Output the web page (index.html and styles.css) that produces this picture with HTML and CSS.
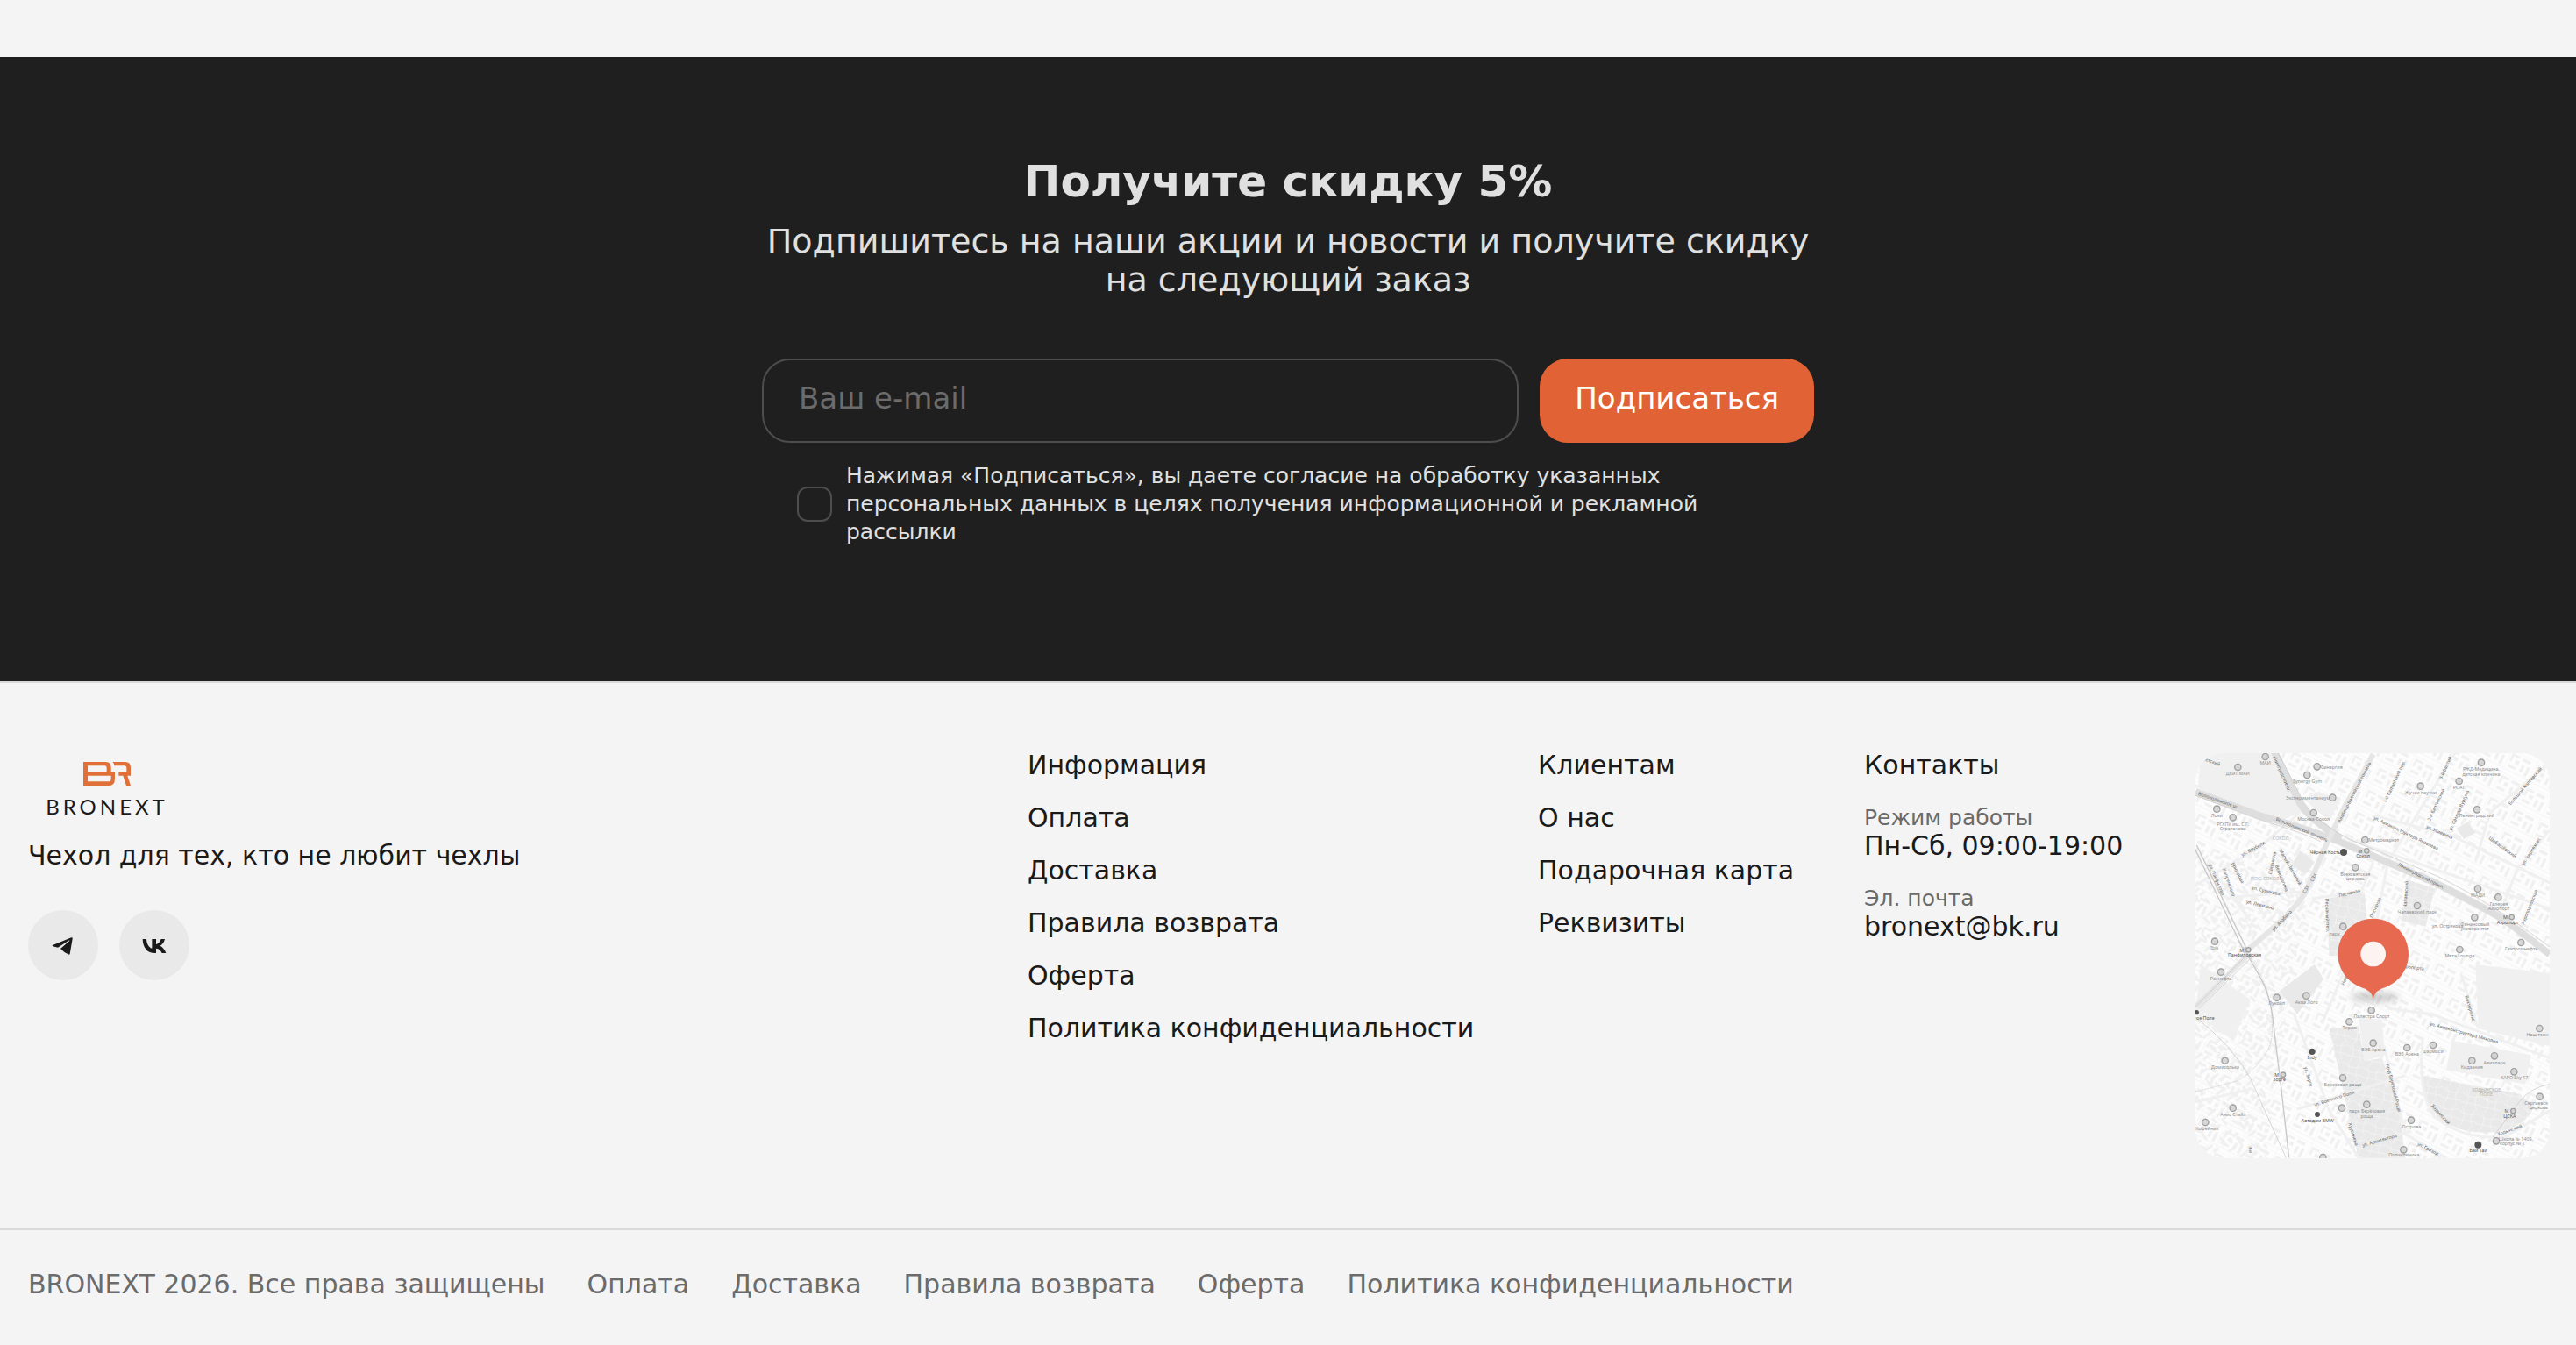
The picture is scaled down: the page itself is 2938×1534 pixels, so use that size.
FILE: index.html
```html
<!DOCTYPE html>
<html lang="ru">

<head>
    <meta charset="UTF-8">
    <meta name="viewport" content="width=device-width, initial-scale=1.0">
    <title>BRONEXT</title>
    <link rel="stylesheet" href="styles.css">
</head>

<body>
    <section class="subscribe">
        <h2 class="subscribe__title">Получите скидку 5%</h2>
        <p class="subscribe__text">Подпишитесь на наши акции и новости и получите скидку на следующий заказ</p>
        <form class="subscribe__form">
            <div class="subscribe__row">
                <input class="subscribe__input" type="email" aria-label="Ваш e-mail" placeholder="Ваш e-mail">
                <button class="subscribe__button" type="submit">Подписаться</button>
            </div>
            <div class="consent">
                <input class="consent__box" type="checkbox" id="consent">
                <label class="consent__label" for="consent">Нажимая «Подписаться», вы даете согласие на обработку указанных персональных данных в целях получения информационной и рекламной рассылки</label>
            </div>
        </form>
    </section>

    <footer class="footer">
        <div class="footer__top">
            <div class="brand">
                <a class="brand__logo" href="#">
                    <svg class="brand__mark" viewBox="195 57 162 81" aria-hidden="true">
                        <path fill-rule="evenodd" d="M195 57H272Q290 57 290 75V90H303V115Q303 138 283 138H195ZM210 70V90H275V77Q275 70 268 70ZM210 104V124H282Q290 124 290 113V104Z" />
                        <path d="M295 57H338Q357 57 357 76V104H346L357 138H342L331 104H316V90H343V78Q343 70 335 70H301Q301 61 295 57Z" />
                    </svg>
                    <span class="brand__name">BRONEXT</span>
                </a>
                <p class="brand__slogan">Чехол для тех, кто не любит чехлы</p>
                <div class="socials">
                    <a class="socials__link" href="#" aria-label="Telegram">
                        <svg viewBox="36 27 240 240" aria-hidden="true">
                            <path d="M120 147L184 121Q189 119 188 125L179 177Q178 181 173 178Q158 171 147 159L178 132Q179 129 175 131L138 155L121 151Q117 149 120 147Z" />
                        </svg>
                    </a>
                    <a class="socials__link" href="#" aria-label="VK">
                        <svg viewBox="348 27 240 240" aria-hidden="true">
                            <path d="M428 126H441C442 143 449 155 460 158V126H474V144C482 143 488 135 491 126H504C501 138 495 145 488 149C496 153 504 162 508 174H494C491 166 484 159 474 158V174H470C444 174 429 157 428 126Z" />
                        </svg>
                    </a>
                </div>
            </div>

            <nav class="menu" aria-label="Информация">
                <p class="menu__item">Информация</p>
                <a class="menu__item" href="#">Оплата</a>
                <a class="menu__item" href="#">Доставка</a>
                <a class="menu__item" href="#">Правила возврата</a>
                <a class="menu__item" href="#">Оферта</a>
                <a class="menu__item" href="#">Политика конфиденциальности</a>
            </nav>

            <nav class="menu" aria-label="Клиентам">
                <p class="menu__item">Клиентам</p>
                <a class="menu__item" href="#">О нас</a>
                <a class="menu__item" href="#">Подарочная карта</a>
                <a class="menu__item" href="#">Реквизиты</a>
            </nav>

            <div class="contacts">
                <p class="menu__item">Контакты</p>
                <div class="contacts__group">
                    <p class="contacts__label">Режим работы</p>
                    <p class="contacts__value">Пн-Сб, 09:00-19:00</p>
                </div>
                <div class="contacts__group">
                    <p class="contacts__label">Эл. почта</p>
                    <a class="contacts__value" href="mailto:bronext@bk.ru">bronext@bk.ru</a>
                </div>
            </div>

            <a class="map" href="#" aria-label="Карта">
                <svg class="map__svg" viewBox="0 0 1212 1386" aria-hidden="true">
                    <defs>
                        <pattern id="blocks" width="96" height="84" patternUnits="userSpaceOnUse" patternTransform="rotate(27)">
                            <path class="map__house" d="M8 10h30v8H16v20H8zM48 10h30v10H48zM54 32h10v26H54zM74 30h10v34H74zM10 50h30v9H10zM28 26h14v14H28z" />
                            <path class="map__lane" d="M0 0H96M0 70H96M0 0V84" />
                        </pattern>
                        <pattern id="blocks-west" width="84" height="90" patternUnits="userSpaceOnUse" patternTransform="rotate(-38)">
                            <path class="map__house" d="M8 8h10v32H8zM26 8h34v9H26zM28 28h9v22h-9zM48 28h22v10H48zM8 60h32v9H8zM52 52h9v24h-9z" />
                            <path class="map__lane" d="M0 0H84M0 0V90" />
                        </pattern>
                        <pattern id="paths" width="70" height="60" patternUnits="userSpaceOnUse" patternTransform="rotate(14)">
                            <path class="map__path" d="M0 12Q30 30 70 8M10 0Q30 30 18 60M52 0Q38 34 60 60M0 44L70 40" />
                        </pattern>
                        <filter id="soft" x="-20%" y="-60%" width="140%" height="220%">
                            <feGaussianBlur stdDeviation="12" />
                        </filter>
                    </defs>

                    <rect class="map__land" width="1212" height="1386" />
                    <rect fill="url(#blocks)" width="1212" height="1386" />
                    <path fill="url(#blocks-west)" d="M0 340L430 340L330 760L240 1386H0Z" />

                    <!-- north half -->
                    <g transform="translate(-42 -27)">
                        <path class="map__zone" d="M60 27H310L400 230L330 260L50 160Z" />
                        <path class="map__zone" d="M450 160L540 180L500 260L430 200Z" />
                        <path class="map__park" d="M490 525L620 500L640 720H500Z M765 460L860 490L830 620L745 600Z M400 360L450 400L420 440L370 410Z M935 285L975 262L1000 300L960 320Z" />
                        <path fill="url(#paths)" d="M490 525L620 500L640 720H500Z M765 460L860 490L830 620L745 600Z" />
                        <g class="map__street">
                            <path d="M200 720L400 540L490 340L650 30" />
                            <path d="M640 720L700 400L930 27" />
                            <path d="M560 320L1254 560M650 240L920 310L1254 470" />
                            <path d="M1090 560L1140 430L1254 290M1254 60L1050 230L1000 400" />
                            <path d="M40 480L260 350L400 230M80 400L230 600M330 350L410 500L160 520" />
                            <path d="M440 525L610 500L650 400" />
                        </g>
                        <path class="map__road" d="M42 160L260 240Q440 290 560 340L860 470Q1040 560 1110 605L1254 715" />
                        <path class="map__road" d="M310 20L400 200Q430 250 540 320" />
                        <path class="map__road map__road--mid" d="M650 30L540 235L490 340L420 500Q380 570 220 700" />
                        <path class="map__road-edge" d="M322 20L412 195Q450 260 570 322L870 448Q1040 530 1254 690M42 172L255 252Q440 310 470 330" />
                        <path class="map__rail" d="M36 345L215 720M46 341L228 720" />

                        <g class="map__poi">
                            <path class="map__dot" d="M270 39a11 11 0 1 0 22 0a11 11 0 1 0-22 0M176 75a11 11 0 1 0 22 0a11 11 0 1 0-22 0M447 73a11 11 0 1 0 22 0a11 11 0 1 0-22 0M413 102a11 11 0 1 0 22 0a11 11 0 1 0-22 0M500 179a11 11 0 1 0 22 0a11 11 0 1 0-22 0M435 231a11 11 0 1 0 22 0a11 11 0 1 0-22 0M104 218a11 11 0 1 0 22 0a11 11 0 1 0-22 0M159 247a11 11 0 1 0 22 0a11 11 0 1 0-22 0M611 324a11 11 0 1 0 22 0a11 11 0 1 0-22 0M801 140a11 11 0 1 0 22 0a11 11 0 1 0-22 0M1009 59a11 11 0 1 0 22 0a11 11 0 1 0-22 0M933 123a11 11 0 1 0 22 0a11 11 0 1 0-22 0M994 220a11 11 0 1 0 22 0a11 11 0 1 0-22 0M578 418a11 11 0 1 0 22 0a11 11 0 1 0-22 0M790 549a11 11 0 1 0 22 0a11 11 0 1 0-22 0M997 491a11 11 0 1 0 22 0a11 11 0 1 0-22 0M1067 520a11 11 0 1 0 22 0a11 11 0 1 0-22 0M986 589a11 11 0 1 0 22 0a11 11 0 1 0-22 0M1145 675a11 11 0 1 0 22 0a11 11 0 1 0-22 0M97 671a11 11 0 1 0 22 0a11 11 0 1 0-22 0M536 620a11 11 0 1 0 22 0a11 11 0 1 0-22 0M935 699a11 11 0 1 0 22 0a11 11 0 1 0-22 0" />
                            <text x="281" y="65">МАИ</text>
                            <text x="187" y="103">ДКиТ МАИ</text>
                            <text x="508" y="80">Синергия</text>
                            <text x="425" y="129">Synergy Gym</text>
                            <text x="427" y="185">Экспериментаниум</text>
                            <text x="446" y="257">Москва-Сокол</text>
                            <text x="115" y="245">Локи</text>
                            <text x="170" y="276">РГХПУ им. С.Г.</text>
                            <text x="170" y="292">Строганова</text>
                            <text x="686" y="330">Метромаркет</text>
                            <text x="813" y="167">Жучки паучки</text>
                            <text x="1020" y="88">РЖД-Медицина,</text>
                            <text x="1020" y="105">детская клиника</text>
                            <text x="943" y="150">РОАТ</text>
                            <text x="1005" y="247">Ленинградский</text>
                            <text x="589" y="446">Всехсвятская</text>
                            <text x="589" y="462">церковь</text>
                            <text x="801" y="577">Чапаевский парк</text>
                            <text x="1008" y="518">МАДИ</text>
                            <text x="1080" y="548">Галерея</text>
                            <text x="1080" y="564">Аэропорт</text>
                            <text x="905" y="625">ул. Острякова</text>
                            <text x="998" y="618">Финансовый</text>
                            <text x="998" y="634">университет</text>
                            <text x="1157" y="702">Газпромнефть</text>
                            <text x="107" y="698">Ibis</text>
                            <text x="518" y="650">парк</text>
                        </g>
                        <g class="map__district">
                            <text x="333" y="323">СОКОЛ</text>
                            <text x="280" y="462">ПОС. СОКОЛ</text>
                        </g>
                        <g class="map__metro">
                            <circle cx="549" cy="366" r="12" />
                            <text x="486" y="372">Чёрная Кость</text>
                            <text x="606" y="368">М</text>
                            <text x="615" y="384">Сокол</text>
                            <text x="1102" y="595">М</text>
                            <text x="1110" y="611">Аэропорт</text>
                        </g>
                        <path class="map__dot" d="M620 361a8 8 0 1 0 16 0a8 8 0 1 0-16 0M1116 588a8 8 0 1 0 16 0a8 8 0 1 0-16 0" />
                        <g class="map__name">
                            <text transform="translate(66 50) rotate(20)">летский</text>
                            <text transform="translate(50 170) rotate(19)">Волоколамское ш.</text>
                            <text transform="translate(316 256) rotate(23)">Волоколамский тоннель</text>
                            <text transform="translate(306 40) rotate(66)">енинградское ш.</text>
                            <text transform="translate(538 266) rotate(-63)">Алабяно-Балтийский тоннель</text>
                            <text transform="translate(694 198) rotate(-65)">1-й Балтийский пер.</text>
                            <text transform="translate(886 118) rotate(-67)">3-й Балтий</text>
                            <text transform="translate(845 260) rotate(-65)">2-й Балтийский</text>
                            <text transform="translate(918 294) rotate(-66)">ул. Самеда Вургуна</text>
                            <text transform="translate(1120 206) rotate(-49)">Большой Коптевский</text>
                            <text transform="translate(650 252) rotate(26)">ул. Авиаконструктора Яковлева</text>
                            <text transform="translate(830 282) rotate(24)">ул. Усиевича</text>
                            <text transform="translate(1044 320) rotate(36)">Шебашёвский</text>
                            <text transform="translate(1166 412) rotate(-58)">ул. Черняховс</text>
                            <text transform="translate(733 412) rotate(27)">Ленинградский просп.</text>
                            <text transform="translate(202 380) rotate(-28)">ул. Врубеля</text>
                            <text transform="translate(86 410) rotate(66)">ул. Панфилова</text>
                            <text transform="translate(134 424) rotate(70)">Кипренского</text>
                            <text transform="translate(164 404) rotate(63)">Брюллова</text>
                            <text transform="translate(302 442) rotate(-78)">Шишкина</text>
                            <text transform="translate(314 412) rotate(68)">Верещагина</text>
                            <text transform="translate(328 360) rotate(60)">Малый Песчаный</text>
                            <text transform="translate(234 492) rotate(13)">ул. Сурикова</text>
                            <text transform="translate(215 540) rotate(14)">ул. Левитана</text>
                            <text transform="translate(310 636) rotate(-46)">ул. Алабяна</text>
                            <text transform="translate(418 508) rotate(-62)">СЗХ</text>
                            <text transform="translate(444 468) rotate(-62)">СЗХ</text>
                            <text transform="translate(534 520) rotate(-14)">Песчаная</text>
                            <text transform="translate(486 524) rotate(88)">Песчаный пер.</text>
                            <text transform="translate(648 592) rotate(-66)">Песчаная</text>
                            <text transform="translate(764 556) rotate(-86)">Чапаевский</text>
                            <text transform="translate(1166 614) rotate(-68)">Аэропортовская</text>
                        </g>
                    </g>

                    <!-- south half -->
                    <g transform="translate(-42 663)">
                        <path class="map__zone" d="M60 60L230 180L170 320L42 230Z" />
                        <path class="map__park" d="M500 280L600 270L620 390L680 380L740 560L760 722H600Z M330 150L450 60L480 110L390 230Z" />
                        <path class="map__park" d="M820 440Q960 470 1140 500L1200 540Q1190 600 1090 630Q960 650 880 590Q810 530 820 440Z" />
                        <path class="map__zone" d="M920 320L1190 370L1170 470L900 420Z M600 240L680 250L690 370L620 390Z M1000 60L1254 90V340L1010 280Z" />
                        <path fill="url(#paths)" d="M500 280L600 270L620 390L680 380L740 560L760 722H600Z M820 440Q960 470 1140 500L1200 540Q1190 600 1090 630Q960 650 880 590Q810 530 820 440Z" />
                        <g class="map__street">
                            <path d="M380 230L500 560L600 722M390 555L760 440M42 530L220 490" />
                            <path d="M690 350L760 640L900 722M610 680L780 630" />
                            <path d="M700 210L850 230L1254 380" />
                            <path d="M820 310Q800 500 860 580Q950 660 1100 650L1254 560" />
                            <path d="M950 90L1010 280M480 250L560 60" />
                        </g>
                        <path class="map__road map__road--mid" d="M42 205L230 20" />
                        <path class="map__road-edge" d="M32 215L215 30M55 210L240 30" />
                        <path class="map__rail" d="M205 0L250 80Q300 160 308 260L335 480L362 722" />
                        <path class="map__line" d="M42 240Q170 340 230 450L352 722M1060 650L1150 530Q1190 480 1254 470" />
                        <path class="map__line map__line--dash" d="M42 496L180 460Q230 440 285 360Q310 320 303 250Q300 130 225 30" />

                        <g class="map__poi">
                            <path class="map__dot" d="M118 86a11 11 0 1 0 22 0a11 11 0 1 0-22 0M309 173a11 11 0 1 0 22 0a11 11 0 1 0-22 0M410 167a11 11 0 1 0 22 0a11 11 0 1 0-22 0M633 217a11 11 0 1 0 22 0a11 11 0 1 0-22 0M557 256a11 11 0 1 0 22 0a11 11 0 1 0-22 0M639 329a11 11 0 1 0 22 0a11 11 0 1 0-22 0M755 345a11 11 0 1 0 22 0a11 11 0 1 0-22 0M844 336a11 11 0 1 0 22 0a11 11 0 1 0-22 0M977 389a11 11 0 1 0 22 0a11 11 0 1 0-22 0M1054 373a11 11 0 1 0 22 0a11 11 0 1 0-22 0M1121 427a11 11 0 1 0 22 0a11 11 0 1 0-22 0M1208 279a11 11 0 1 0 22 0a11 11 0 1 0-22 0M1209 512a11 11 0 1 0 22 0a11 11 0 1 0-22 0M132 389a11 11 0 1 0 22 0a11 11 0 1 0-22 0M159 551a11 11 0 1 0 22 0a11 11 0 1 0-22 0M65 600a11 11 0 1 0 22 0a11 11 0 1 0-22 0M535 448a11 11 0 1 0 22 0a11 11 0 1 0-22 0M617 539a11 11 0 1 0 22 0a11 11 0 1 0-22 0M532 551a11 11 0 1 0 22 0a11 11 0 1 0-22 0M769 593a11 11 0 1 0 22 0a11 11 0 1 0-22 0M743 694a11 11 0 1 0 22 0a11 11 0 1 0-22 0M1060 664a11 11 0 1 0 22 0a11 11 0 1 0-22 0M467 720a11 11 0 1 0 22 0a11 11 0 1 0-22 0" />
                            <text x="129" y="113">Роснефть</text>
                            <text x="320" y="198">Лукойл</text>
                            <text x="422" y="194">Аква Лого</text>
                            <text x="946" y="36">Мята Lounge</text>
                            <text x="645" y="244">Палестра Спорт</text>
                            <text x="569" y="283">Тираж</text>
                            <text x="651" y="356">ВЭБ Арена</text>
                            <text x="766" y="372">ВЭБ Арена</text>
                            <text x="855" y="363">Фармаси</text>
                            <text x="988" y="417">Кидзания</text>
                            <text x="1065" y="401">Авиапарк</text>
                            <text x="1133" y="454">КАРО Sky 17</text>
                            <text x="1212" y="305">Наш тенн</text>
                            <text x="1208" y="540">Сергиевск</text>
                            <text x="1216" y="556">церковь</text>
                            <text x="144" y="416">Домисолька</text>
                            <text x="171" y="578">Анис Стайл</text>
                            <text x="82" y="627">Кофейник</text>
                            <text x="546" y="476">Березовая роща</text>
                            <text x="629" y="568">парк Берёзовая</text>
                            <text x="629" y="584">роща</text>
                            <text x="781" y="621">Острова</text>
                            <text x="755" y="718">Поликлиника</text>
                            <text x="1138" y="663">Школа № 1409,</text>
                            <text x="1126" y="679">корпус № 1</text>
                        </g>
                        <g class="map__district">
                            <text x="1037" y="494">ХОДЫНСКОЕ</text>
                            <text x="1037" y="510">ПОЛЕ</text>
                        </g>
                        <g class="map__metro">
                            <circle cx="441" cy="358" r="11" />
                            <circle cx="459" cy="573" r="9" />
                            <circle cx="1009" cy="677" r="12" />
                            <circle cx="46" cy="224" r="8" />
                            <text x="200" y="17">М</text>
                            <text x="210" y="33">Панфиловская</text>
                            <text x="76" y="248">ое Поле</text>
                            <text x="441" y="385">Indy</text>
                            <text x="320" y="444">М</text>
                            <text x="329" y="460">Зорге</text>
                            <text x="460" y="600">Автодом BMW</text>
                            <text x="1107" y="568">М</text>
                            <text x="1117" y="584">ЦСКА</text>
                            <text x="1010" y="703">Вай Тай</text>
                        </g>
                        <path class="map__dot" d="M215 10a8 8 0 1 0 16 0a8 8 0 1 0-16 0M334 437a8 8 0 1 0 16 0a8 8 0 1 0-16 0M1121 561a8 8 0 1 0 16 0a8 8 0 1 0-16 0" />
                        <g class="map__name">
                            <text transform="translate(550 132) rotate(-64)">Ново</text>
                            <text transform="translate(760 72) rotate(8)">ропорта</text>
                            <text transform="translate(964 168) rotate(74)">Викторенко</text>
                            <text transform="translate(843 268) rotate(15)">ул. Авиаконструктора Микояна</text>
                            <text transform="translate(414 412) rotate(74)">ул. Зорге</text>
                            <text transform="translate(450 546) rotate(-18)">ул. Военного Поля</text>
                            <text transform="translate(565 604) rotate(73)">Куусинена</text>
                            <text transform="translate(694 402) rotate(76)">пр-д Берёзовой Рощи</text>
                            <text transform="translate(848 544) rotate(48)">Ходынский</text>
                            <text transform="translate(1078 646) rotate(-19)">Ходынский</text>
                            <text transform="translate(614 684) rotate(-16)">ул. Архитектора</text>
                            <text transform="translate(800 678) rotate(27)">ул. Гризод</text>
                            <text transform="translate(224 682) rotate(88)">3-я</text>
                        </g>

                        <ellipse class="map__shadow" cx="655" cy="172" rx="84" ry="16" filter="url(#soft)" />
                        <path class="map__pin" d="M650 176Q643 146 606 137A121 121 0 1 1 694 137Q657 146 650 176Z" />
                        <circle class="map__hole" cx="650" cy="24" r="43" />
                    </g>
                </svg>
            </a>
        </div>

        <div class="footer__bottom">
            <span>BRONEXT 2026. Все права защищены</span>
            <a href="#">Оплата</a>
            <a href="#">Доставка</a>
            <a href="#">Правила возврата</a>
            <a href="#">Оферта</a>
            <a href="#">Политика конфиденциальности</a>
        </div>
    </footer>
</body>

</html>
```
FILE: styles.css
```css
:root {
    --dark: #1f1f1f;
    --light: #f4f4f4;
    --text: #1a1a1a;
    --muted: #6b6b6b;
    --line: #4d4d4d;
    --divider: #d9d9d9;
    --accent: #e16335;
}

* {
    box-sizing: border-box;
}

body {
    background-color: var(--light);
    color: var(--text);
    font-family: 'DejaVu Sans', sans-serif;
    font-size: 30px;
    line-height: 28px;
    margin: 0;
    padding: 65px 0 0;
}

h2,
p {
    margin: 0;
}

a {
    color: inherit;
    text-decoration: none;
}

.subscribe {
    align-items: center;
    background-color: var(--dark);
    color: #e0e0e0;
    display: flex;
    flex-direction: column;
    padding: 112px 32px 154px;
}

.subscribe__title {
    font-size: 50px;
    line-height: 60px;
}

.subscribe__text {
    font-size: 38px;
    line-height: 44px;
    margin-top: 16px;
    max-width: 1200px;
    text-align: center;
}

.subscribe__form {
    margin-top: 68px;
    max-width: 1200px;
    width: 100%;
}

.subscribe__row {
    display: flex;
    gap: 24px;
}

.subscribe__input,
.subscribe__button {
    border-radius: 32px;
    font-family: inherit;
    font-size: 34px;
    height: 96px;
    line-height: 40px;
    padding: 0 40px 6px;
}

.subscribe__input {
    background: none;
    border: 2px solid var(--line);
    color: #e0e0e0;
    flex: 1;
    min-width: 0;
}

.subscribe__input::placeholder {
    color: #6b6b6b;
    opacity: 1;
}

.subscribe__button {
    background-color: var(--accent);
    border: 0;
    color: #ffffff;
}

.consent {
    align-items: center;
    display: flex;
    gap: 16px;
    margin-top: 22px;
    padding: 0 40px;
}

.consent__box {
    appearance: none;
    border: 2px solid var(--line);
    border-radius: 12px;
    flex-shrink: 0;
    height: 40px;
    margin: 0;
    width: 40px;
}

.consent__label {
    font-size: 25px;
    line-height: 32px;
}

.footer {
    border-top: 2px solid var(--divider);
}

.footer__top {
    align-items: start;
    display: grid;
    gap: 80px;
    grid-template-columns: 1fr 502px 292px 298px 404px;
    padding: 80px 30px 80px 32px;
}

.brand__logo {
    align-items: center;
    display: flex;
    flex-direction: column;
    gap: 12px;
    padding: 10px 0 30px;
    width: 180px;
}

.brand__mark {
    fill: #e07038;
    height: 27px;
    width: 54px;
}

.brand__name {
    font-family: Lato, sans-serif;
    font-size: 24px;
    letter-spacing: 4px;
    line-height: 24px;
}

.socials {
    display: flex;
    gap: 24px;
    margin-top: 48px;
}

.socials__link {
    background-color: #e9e9e9;
    border-radius: 50%;
    fill: var(--text);
    height: 80px;
    width: 80px;
}

.menu,
.contacts {
    display: flex;
    flex-direction: column;
    white-space: nowrap;
}

.menu {
    gap: 32px;
}

.contacts {
    gap: 28px;
}

.contacts .menu__item {
    margin-bottom: 4px;
}

.contacts__label {
    color: var(--muted);
    font-size: 25px;
}

.contacts__value {
    display: block;
    line-height: 36px;
}

.map {
    border-radius: 32px;
    display: block;
    overflow: hidden;
}

.map__svg {
    display: block;
    font-family: 'Noto Sans', sans-serif;
    font-size: 16px;
    width: 100%;
}

.map__land {
    fill: #fdfdfd;
}

.map__house,
.map__zone {
    fill: #f0f0f0;
}

.map__park {
    fill: #e9e9e9;
}

.map__lane {
    fill: none;
    stroke: #f4f4f4;
    stroke-width: 3;
}

.map__path {
    fill: none;
    stroke: #f6f6f6;
    stroke-width: 2;
}

.map__street {
    fill: none;
    stroke: #f0f0f0;
    stroke-width: 9;
}

.map__road {
    fill: none;
    stroke: #dedede;
    stroke-width: 24;
}

.map__road--mid {
    stroke: #e6e6e6;
    stroke-width: 18;
}

.map__road-edge,
.map__line {
    fill: none;
    stroke: #c4c4c4;
    stroke-width: 2;
}

.map__line--dash {
    stroke-dasharray: 5 3;
}

.map__rail {
    fill: none;
    stroke: #c8c8c8;
    stroke-width: 4;
}

.map__poi,
.map__district,
.map__metro {
    text-anchor: middle;
}

.map__poi {
    fill: #8e8e8e;
}

.map__dot {
    fill: #d6d6d6;
    stroke: #a0a0a0;
    stroke-width: 4;
}

.map__district {
    fill: #b0b0b0;
}

.map__metro {
    fill: #555555;
}

.map__name {
    fill: #666666;
}

.map__shadow {
    fill: #000000;
    opacity: 0.2;
}

.map__pin {
    fill: #e66950;
}

.map__hole {
    fill: #fdf3f1;
}

.footer__bottom {
    border-top: 2px solid var(--divider);
    color: var(--muted);
    display: flex;
    gap: 48px;
    line-height: 36px;
    padding: 44px 32px 50px;
}
```
